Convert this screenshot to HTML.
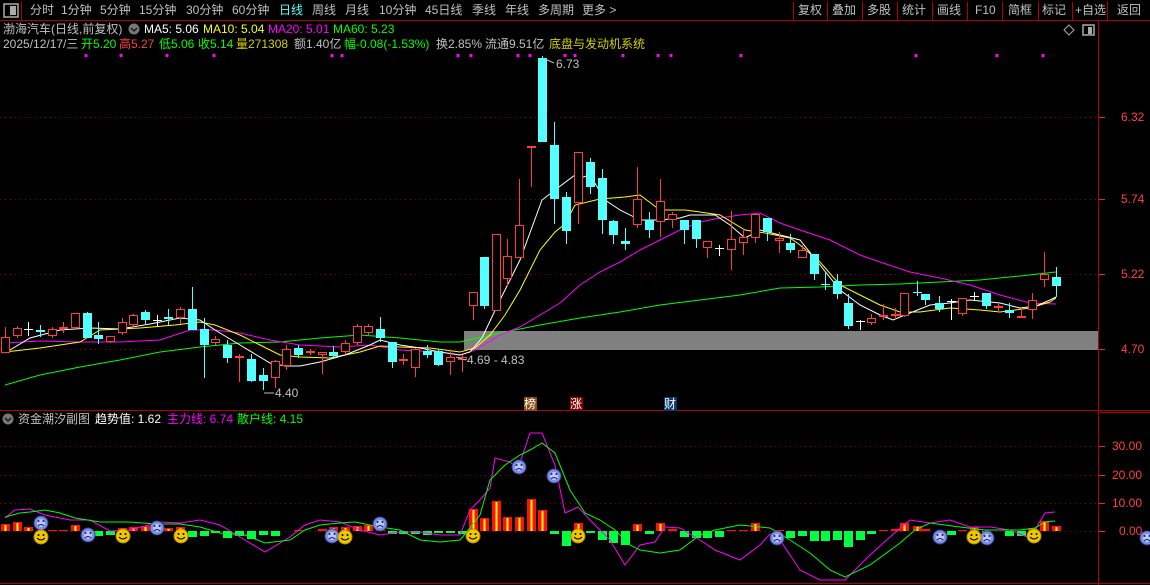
<!DOCTYPE html>
<html><head><meta charset="utf-8">
<style>
*{margin:0;padding:0}
body{width:1150px;height:585px;background:#000;overflow:hidden;position:relative;font-family:"Liberation Sans","Noto Sans CJK SC",sans-serif;font-size:12px;color:#c0c0c0}
.t{position:absolute;white-space:nowrap;line-height:14px}
svg{position:absolute;left:0;top:0}
</style></head><body>
<svg id="s" width="1150" height="585" xmlns="http://www.w3.org/2000/svg">
<g stroke="#b00000" stroke-width="1" fill="none">
<line x1="0" y1="20.5" x2="1150" y2="20.5"/>
<line x1="21.5" y1="2" x2="21.5" y2="20"/>
<line x1="0" y1="410.5" x2="1150" y2="410.5"/>
<line x1="0" y1="583.5" x2="1150" y2="583.5"/>
<line x1="1098.5" y1="20" x2="1098.5" y2="585"/>
<line x1="1100" y1="412.5" x2="1150" y2="412.5"/>
<line x1="793.5" y1="2" x2="793.5" y2="20"/><line x1="827.5" y1="2" x2="827.5" y2="20"/>
<line x1="862.5" y1="2" x2="862.5" y2="20"/><line x1="897.5" y1="2" x2="897.5" y2="20"/>
<line x1="932.5" y1="2" x2="932.5" y2="20"/><line x1="967.5" y1="2" x2="967.5" y2="20"/>
<line x1="1002.5" y1="2" x2="1002.5" y2="20"/><line x1="1038.5" y1="2" x2="1038.5" y2="20"/>
<line x1="1072.5" y1="2" x2="1072.5" y2="20"/><line x1="1107.5" y1="2" x2="1107.5" y2="20"/>
</g>
<g stroke="#900000" stroke-dasharray="1 4">
<line x1="0" y1="117.5" x2="1098" y2="117.5"/><line x1="0" y1="199.5" x2="1098" y2="199.5"/>
<line x1="0" y1="274.5" x2="1098" y2="274.5"/><line x1="0" y1="349.5" x2="1098" y2="349.5"/>
<line x1="0" y1="446.5" x2="1098" y2="446.5"/><line x1="0" y1="475.5" x2="1098" y2="475.5"/>
<line x1="0" y1="503.5" x2="1098" y2="503.5"/><line x1="0" y1="531.5" x2="1098" y2="531.5"/>
</g>
<g stroke="#d03030"><line x1="1099" y1="117.5" x2="1105" y2="117.5"/><line x1="1099" y1="199.5" x2="1105" y2="199.5"/><line x1="1099" y1="274.5" x2="1105" y2="274.5"/><line x1="1099" y1="349.5" x2="1105" y2="349.5"/>
<line x1="1099" y1="446.5" x2="1105" y2="446.5"/><line x1="1099" y1="475.5" x2="1105" y2="475.5"/><line x1="1099" y1="503.5" x2="1105" y2="503.5"/><line x1="1099" y1="531.5" x2="1105" y2="531.5"/></g>
<rect x="464" y="331" width="634" height="19" fill="#808080"/>
<rect x="4" y="4" width="14" height="13" fill="none" stroke="#aaa" stroke-width="1.5"/><rect x="10" y="6" width="6" height="9" fill="#aaa"/>
<path d="M1069 25 l5 5 -5 5 -5 -5z" fill="none" stroke="#aaa"/>
<rect x="1083" y="25" width="11" height="10" fill="none" stroke="#aaa" stroke-width="1.5"/><rect x="1088" y="27" width="4" height="7" fill="#aaa"/>
<circle cx="134" cy="29" r="5.5" fill="#777"/><path d="M131 28 l3 3 3-3" stroke="#111" fill="none" stroke-width="1.3"/>
<circle cx="8" cy="419" r="5.5" fill="#777"/><path d="M5 418 l3 3 3-3" stroke="#111" fill="none" stroke-width="1.3"/>
<g id="ma" fill="none" stroke-width="1"></g>
<g id="cd"></g>
<g id="sub"></g>
<g fill="#c0c0c0" stroke="#c0c0c0"><line x1="545" y1="59" x2="554" y2="63"/><line x1="264" y1="393" x2="274" y2="393"/><line x1="456" y1="357" x2="466" y2="360"/></g>
</svg>
<div class="t" style="left:30px;top:3px">分时</div><div class="t" style="left:61px;top:3px">1分钟</div><div class="t" style="left:100px;top:3px">5分钟</div><div class="t" style="left:139px;top:3px">15分钟</div><div class="t" style="left:186px;top:3px">30分钟</div><div class="t" style="left:232px;top:3px">60分钟</div><div class="t" style="left:279px;top:3px;color:#54ffff">日线</div><div class="t" style="left:312px;top:3px">周线</div><div class="t" style="left:345px;top:3px">月线</div><div class="t" style="left:379px;top:3px">10分钟</div><div class="t" style="left:425px;top:3px">45日线</div><div class="t" style="left:472px;top:3px">季线</div><div class="t" style="left:505px;top:3px">年线</div><div class="t" style="left:538px;top:3px">多周期</div><div class="t" style="left:582px;top:3px">更多 &gt;</div>
<div class="t" style="left:798px;top:3px">复权</div><div class="t" style="left:832px;top:3px">叠加</div><div class="t" style="left:867px;top:3px">多股</div><div class="t" style="left:902px;top:3px">统计</div><div class="t" style="left:937px;top:3px">画线</div><div class="t" style="left:975px;top:3px">F10</div><div class="t" style="left:1008px;top:3px">简框</div><div class="t" style="left:1042px;top:3px">标记</div><div class="t" style="left:1075px;top:3px">+自选</div><div class="t" style="left:1117px;top:3px">返回</div>
<div class="t" style="left:3px;top:22px">渤海汽车(日线,前复权)</div>
<div class="t" style="left:144px;top:22px;color:#fff">MA5: 5.06</div><div class="t" style="left:203px;top:22px;color:#ffff00">MA10: 5.04</div><div class="t" style="left:268px;top:22px;color:#ff00ff">MA20: 5.01</div><div class="t" style="left:333px;top:22px;color:#00ff00">MA60: 5.23</div>
<div class="t" style="left:3px;top:37px">2025/12/17/三</div><div class="t" style="left:81px;top:37px;color:#00ff00">开5.20</div><div class="t" style="left:119px;top:37px;color:#ff4040">高5.27</div><div class="t" style="left:159px;top:37px;color:#00ff00">低5.06</div><div class="t" style="left:198px;top:37px;color:#00ff00">收5.14</div><div class="t" style="left:236px;top:37px;color:#d0d000">量271308</div><div class="t" style="left:294px;top:37px">额1.40亿</div><div class="t" style="left:344px;top:37px;color:#00ff00">幅-0.08(-1.53%)</div><div class="t" style="left:436px;top:37px">换2.85%</div><div class="t" style="left:485px;top:37px">流通9.51亿</div><div class="t" style="left:549px;top:37px;color:#d0d000">底盘与发动机系统</div>
<div class="t" style="left:556px;top:57px">6.73</div><div class="t" style="left:467px;top:353px">4.69 - 4.83</div><div class="t" style="left:275px;top:386px">4.40</div>
<div class="t" style="left:1121px;top:110px;color:#ff4040">6.32</div><div class="t" style="left:1121px;top:192px;color:#ff4040">5.74</div><div class="t" style="left:1121px;top:267px;color:#ff4040">5.22</div><div class="t" style="left:1121px;top:342px;color:#ff4040">4.70</div>
<div class="t" style="left:1112px;top:439px;color:#ff4040">30.00</div><div class="t" style="left:1112px;top:468px;color:#ff4040">20.00</div><div class="t" style="left:1112px;top:496px;color:#ff4040">10.00</div><div class="t" style="left:1119px;top:524px;color:#ff4040">0.00</div>
<div class="t" style="left:524px;top:397px;background:#8b4a10;color:#fff;width:13px">榜</div><div class="t" style="left:570px;top:397px;background:#8b0000;color:#fff;width:13px">涨</div><div class="t" style="left:664px;top:397px;background:#0a3a6a;color:#fff;width:13px">财</div>
<div class="t" style="left:18px;top:412px">资金潮汐副图</div><div class="t" style="left:95px;top:412px;color:#fff">趋势值: 1.62</div><div class="t" style="left:167px;top:412px;color:#ff00ff">主力线: 6.74</div><div class="t" style="left:237px;top:412px;color:#00ff00">散户线: 4.15</div>
<script>
var NS="http://www.w3.org/2000/svg";
function el(p,t,a){var e=document.createElementNS(NS,t);for(var k in a)e.setAttribute(k,a[k]);p.appendChild(e);return e;}
var ma=document.getElementById('ma'),cd=document.getElementById('cd'),sub=document.getElementById('sub');
function pl(pts,c,g){el(g||ma,'polyline',{points:pts,stroke:c,fill:'none'});}
pl("5,385 40,375 80,367 120,360 160,352 200,347 240,343 280,342 320,338 360,335 400,338 440,342 460,342 500,333 540,325 580,318 620,312 660,305 700,300 740,295 780,288 820,287 860,285 900,284 940,282 980,280 1020,276 1056,272","#00ff00");
pl("5,343 40,341 80,342 120,342 160,340 190,330 215,330 240,333 270,340 300,345 340,347 370,345 400,350 440,352 460,355 475,350 500,335 520,327 540,315 560,303 580,285 600,272 620,262 640,250 660,240 680,230 700,222 720,218 740,215 760,213 780,223 800,230 830,240 860,255 880,262 910,272 940,278 970,285 1000,295 1030,303 1056,304","#ff00ff");
pl("5,352 40,348 60,345 80,342 100,330 140,328 175,325 200,322 215,325 240,335 260,345 280,355 300,357 330,358 360,352 380,346 400,347 430,348 460,352 475,348 490,335 505,315 520,290 540,250 555,232 565,224 575,205 600,199 625,197 640,195 660,210 685,210 700,212 720,215 745,230 765,233 790,238 800,245 820,262 840,285 860,295 880,305 900,312 920,312 950,308 980,310 1000,312 1030,308 1050,302 1056,298","#ffff00");
pl("5,353 30,338 60,330 90,328 120,329 150,324 180,318 200,320 215,330 240,345 270,363 285,366 300,366 320,362 345,355 370,345 380,340 400,345 420,348 440,352 460,355 470,352 482,338 500,300 520,260 542,200 555,190 575,175 580,178 590,175 605,200 620,210 640,220 660,220 680,218 690,215 700,215 715,215 730,225 745,238 760,230 780,235 800,240 820,265 840,290 860,305 880,315 893,320 910,313 930,305 950,303 970,300 1000,303 1020,308 1036,306 1050,300 1056,297","#ffffff");
var C=[[5,337,353,327,353,'r'],[17,328,336,326,338,'r'],[28,329,329,322,336,'w'],[40,330,332,325,337,'c'],[52,329,336,327,338,'r'],[63,327,329,322,333,'r'],[75,313,328,313,328,'r'],[87,313,338,312,338,'c'],[98,335,339,322,344,'c'],[110,336,342,336,343,'r'],[122,322,333,318,335,'r'],[133,315,325,314,327,'r'],[145,312,320,310,324,'c'],[157,320,320,315,326,'w'],[168,317,319,309,325,'c'],[180,309,318,307,324,'r'],[192,309,330,287,330,'c'],[204,329,345,318,378,'c'],[215,339,343,336,345,'r'],[227,345,358,340,363,'c'],[239,356,358,354,382,'r'],[251,359,381,354,382,'c'],[263,375,381,368,390,'c'],[275,361,378,360,388,'r'],[286,349,366,345,370,'r'],[298,348,355,345,358,'c'],[310,351,353,349,355,'r'],[322,352,355,352,374,'r'],[333,352,356,346,359,'c'],[345,343,352,340,354,'r'],[357,326,343,324,345,'r'],[368,326,333,324,335,'r'],[380,329,338,317,342,'c'],[392,342,362,342,368,'c'],[403,359,361,354,365,'r'],[415,349,368,348,377,'r'],[427,351,355,345,358,'c'],[438,351,365,349,366,'c'],[450,357,362,350,375,'r'],[462,357,360,355,372,'r'],
[473,292,306,292,320,'r'],[484,257,306,257,309,'c'],[496,234,311,234,311,'r'],[507,256,279,239,287,'r'],[519,225,258,179,258,'r'],[531,146,148,146,187,'r'],[542,58,142,56,142,'c'],[554,145,199,122,224,'c'],[566,197,231,192,244,'c'],[578,152,203,152,224,'r'],[590,162,187,158,194,'c'],[602,178,220,169,234,'c'],[613,221,235,220,244,'c'],[625,241,244,228,250,'c'],[637,199,225,167,228,'r'],[649,220,230,212,238,'c'],[660,201,222,179,237,'r'],[672,214,220,212,228,'r'],[684,220,230,220,244,'c'],[696,220,239,220,248,'c'],[707,241,248,241,258,'r'],[719,248,248,245,256,'w'],[731,239,250,211,270,'r'],[743,237,243,229,255,'r'],[755,214,238,214,243,'r'],[767,218,232,218,241,'c'],[779,238,241,232,253,'r'],[790,243,250,234,253,'c'],[802,250,258,245,258,'r'],[814,254,274,254,280,'c'],[825,284,284,271,290,'cc'],[837,281,294,274,299,'c'],[848,303,326,294,329,'c'],[860,321,321,320,330,'w'],[871,318,323,314,325,'r'],[883,315,316,304,320,'r'],[895,314,316,308,320,'r'],[904,293,316,293,317,'r'],[917,292,292,281,296,'cc'],[925,294,300,294,305,'c'],[939,303,309,296,312,'c'],[951,301,301,299,320,'w'],[962,298,314,298,316,'r'],[974,296,296,292,300,'w'],[986,293,306,293,309,'c'],[998,306,308,304,312,'r'],[1009,310,313,303,318,'c'],[1021,316,318,308,318,'r'],[1032,300,310,293,319,'r'],[1044,274,280,252,287,'r'],[1056,277,286,267,297,'c']];
C.forEach(function(d){var x=d[0],t=d[5];var col=(t=='r')?'#ff3c3c':(t=='w'?'#fff':'#54ffff');
 el(cd,'line',{x1:x+.5,y1:d[3],x2:x+.5,y2:d[4],stroke:col});
 if(t=='w'||t=='cc'){el(cd,'line',{x1:x-4,y1:d[1]+.5,x2:x+5,y2:d[1]+.5,stroke:col});}
 else if(t=='r'){var h=d[2]-d[1];if(h<3)el(cd,'rect',{x:x-4,y:d[1],width:9,height:Math.max(h,2),fill:col});else el(cd,'rect',{x:x-3.5,y:d[1]+.5,width:8,height:h-1,fill:'#000',stroke:col});}
 else el(cd,'rect',{x:x-4,y:d[1],width:9,height:Math.max(d[2]-d[1],2),fill:col});});
var H=[7,9,4,0,1,1,6,0,-5,-4,3,4,5,2,3,4,-6,-5,-2,-7,-5,-8,-4,-5,0,1,0,2,4,4,5,6,6,-3,-3,-3,-4,-2,-2,-3,22,13,30,14,14,32,21,-3,-15,8,-2,-9,-12,-14,7,-3,8,2,-6,-7,-7,-6,1,1,8,0,1,-7,-5,-10,-10,-9,-16,-9,-3,1,2,8,5,2,0,-4,1,4,-2,0,-5,-5,3,10,5];
H.forEach(function(h,i){var x=C[i][0];if(h>0){el(sub,'rect',{x:x-4,y:531-h,width:9,height:h,fill:'#ff1010'});if(h>2)el(sub,'rect',{x:x-.5,y:531-h+1,width:2,height:h-1,fill:'#ffff00'});}else if(h<0){el(sub,'rect',{x:x-4,y:531,width:9,height:-h,fill:'#00ff40'});}});
pl("5,518 15,510 30,509 45,515 70,520 90,520 110,531 130,530 160,522 180,523 200,520 220,525 245,540 265,552 290,537 305,525 320,520 340,522 360,530 380,535 400,532 420,532 440,535 460,535 470,510 480,500 490,488 495,458 510,462 518,469 530,433 542,433 555,465 565,513 578,507 590,520 610,540 625,565 640,545 655,542 665,527 680,528 700,540 715,550 740,560 760,545 770,534 780,540 800,570 820,580 845,580 870,555 890,537 910,520 930,523 950,520 970,527 990,527 1010,530 1030,538 1045,513 1055,512","#ff00ff",sub);
pl("5,517 20,513 30,512 45,510 60,513 75,518 100,522 130,522 155,524 180,524 200,527 220,533 245,535 265,543 290,540 305,530 320,525 340,523 355,522 380,527 400,530 420,540 440,542 460,540 470,528 480,515 490,480 505,465 520,455 530,450 542,443 555,453 570,490 585,513 600,520 615,530 630,545 640,550 660,553 680,550 700,535 715,530 740,525 770,528 790,540 810,553 830,570 845,577 870,565 900,543 915,530 930,523 960,527 985,530 1000,530 1020,530 1035,528 1045,522 1055,521","#00ff00",sub);
function face(x,y,happy){if(happy){el(sub,'circle',{cx:x,cy:y,r:7,fill:'#f0c800',stroke:'#b08800'});el(sub,'circle',{cx:x-2.5,cy:y-2,r:1,fill:'#000'});el(sub,'circle',{cx:x+2.5,cy:y-2,r:1,fill:'#000'});el(sub,'path',{d:'M'+(x-4)+' '+(y+1)+' q4 4 8 0',stroke:'#000',fill:'none'});}
else{el(sub,'circle',{cx:x,cy:y,r:7,fill:'#8090e0',stroke:'#3040a0'});el(sub,'circle',{cx:x,cy:y,r:4,fill:'#c0c8f8'});el(sub,'circle',{cx:x-2.5,cy:y-2,r:1,fill:'#102070'});el(sub,'circle',{cx:x+2.5,cy:y-2,r:1,fill:'#102070'});el(sub,'path',{d:'M'+(x-3)+' '+(y+3)+' q3 -3 6 0',stroke:'#102070',fill:'none'});}}
[[41,523],[88,535],[157,528],[332,536],[380,524],[519,467],[554,476],[777,538],[940,537],[987,538],[1147,538]].forEach(function(p){face(p[0],p[1],0);});
[[41,537],[123,536],[181,536],[345,537],[473,536],[578,536],[974,537],[1034,536]].forEach(function(p){face(p[0],p[1],1);});
var dots=[86,121,167,214,332,342,458,471,518,530,565,575,623,658,671,741,916,997,1043];
dots.forEach(function(x){el(document.getElementById('s'),'rect',{x:x-1.5,y:54,width:3,height:3,fill:'#ff00ff'});});
</script>
</body></html>
